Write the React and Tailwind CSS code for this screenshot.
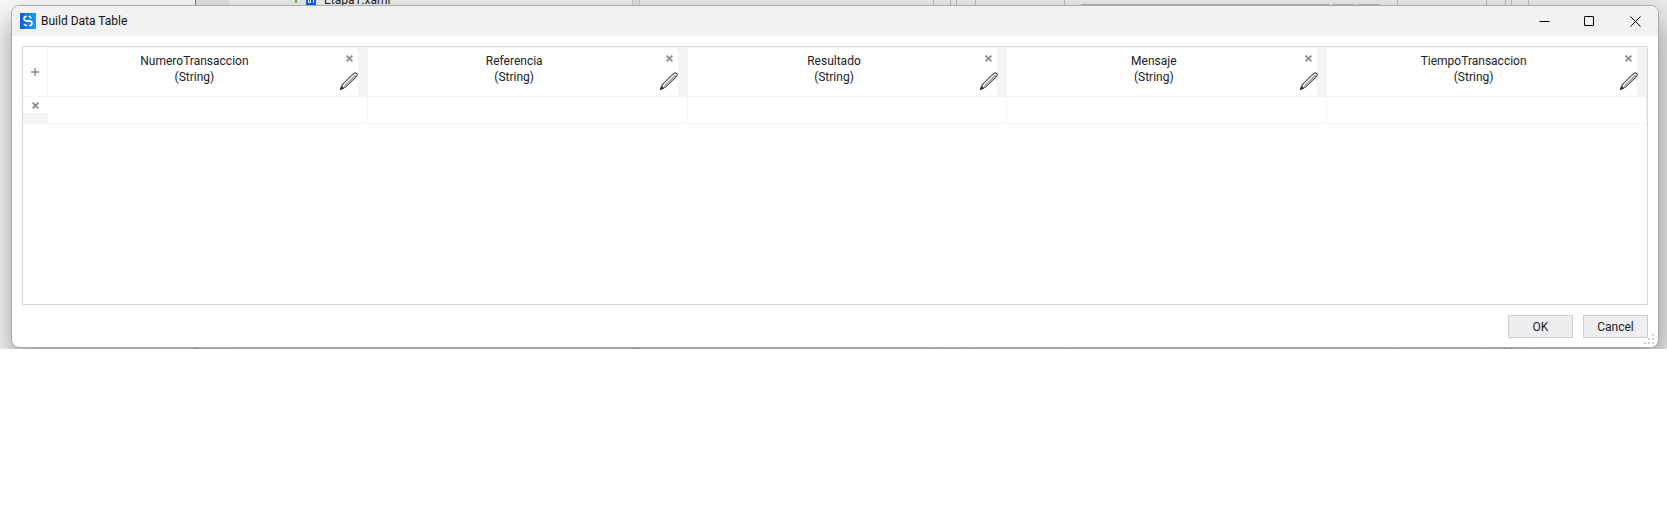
const columns = ['NumeroTransaccion', 'Referencia', 'Resultado', 'Mensaje', 'TiempoTransaccion'];

function Cross() {
  return (
    <svg width="7" height="7" viewBox="0 0 7 7" stroke="#8a8a8a" strokeWidth="1.7" aria-hidden="true">
      <path d="M.6 .6 6.4 6.4M6.4 .6 .6 6.4" />
    </svg>
  );
}

function Pencil() {
  return (
    <svg width="18" height="18" viewBox="0 0 18 18" aria-hidden="true">
      <path d="M.8 17.2 2.2 12.8 13.6 1.6Q15 .2 16.4 1.2 17.8 2.3 16.9 3.8L5.2 15.4Z" fill="#f4f4f4" stroke="#444" strokeWidth="1.1" />
      <path d="M4.4 14.2 15.6 3.4" stroke="#b0b0b0" strokeWidth="2" />
      <path d="M3.3 12.9 14 2.6" stroke="#fff" strokeWidth=".8" />
      <path d="M13 2.3 15.9 5" stroke="#888" strokeWidth=".7" />
      <path d="M.4 17.6 1.5 14.4 3.8 16.2Z" fill="#222" stroke="#222" strokeWidth=".6" />
    </svg>
  );
}

function Logo() {
  return (
    <svg width="16" height="16" viewBox="0 0 16 16" fill="none" aria-hidden="true">
      <defs>
        <linearGradient id="logo" x1="0" y1="0" x2="1" y2="0">
          <stop offset="0" stopColor="#0560dd" />
          <stop offset="1" stopColor="#1aa0ee" />
        </linearGradient>
      </defs>
      <path d="M0 0h16v16H0z" fill="url(#logo)" />
      <path d="M6.600 3.400Q4 3.600 4 5.700 4.100 7.800 7 8H9" stroke="#fff" strokeWidth="1.600" />
      <path d="M7.400 7.900H9.200Q12 8.300 12 10.400 11.900 12.500 9.200 12.700" stroke="#fff" strokeWidth="1.600" />
      <path d="M8.600 3.400H10.600M10.800 3.900V5.600M3.800 11.300Q5 12.500 7 12.600" stroke="#fff" strokeWidth="1.500" />
    </svg>
  );
}

/* The editor that lies behind the dialog; only its edges show. */
function Backdrop() {
  return (
    <div className="absolute inset-0 bg-[#e9e9e9]" aria-hidden="true">
      <svg className="absolute inset-0" width="1667" height="349">
        <path d="M0 0h195v349H0z" fill="#f7f7f7" />
        <path d="M196 0h33v349h-33z" fill="#e0e3e3" />
        <path d="M229 0h403v349H229z" fill="#ececec" />
        <path d="M633 0h6v349h-6z" fill="#dde0e0" />
        <path d="M195.500 0v349" stroke="#777" />
        <path d="M632.500 0v349M639.500 0v349" stroke="#c9cccc" />
        <path d="M933.500 0v349M950.500 0v349M956.500 0v349M975.500 0v349M1064.500 0v349M1397.500 0v349M1486.500 0v349M1505.500 0v349M1511.500 0v349M1528.500 0v349" stroke="#b4bcc2" />
        <path d="M1081 4.500h249M1332 4.500h23M1357 4.500h23" stroke="#b0b8bb" />
        <path d="M295 0h2v3h-2z" fill="#70b860" />
        <path d="M306 0h10v6h-10z" fill="#0a5fd0" />
        <path d="M308.500 0v2.500h2V0M313.500 0v3" stroke="#fff" fill="none" />
      </svg>
      <span className="absolute -top-2 left-[324px] text-xs leading-4">Etapa1.xaml</span>
    </div>
  );
}

export default function App() {
  return (
    <div className="min-h-screen bg-white font-['Roboto',sans-serif] text-xs leading-4 text-[#222]">
      <div className="relative overflow-hidden pt-[5px] pr-2 pb-px pl-[11px]">
        <Backdrop />
        <main className="relative flex flex-col overflow-hidden rounded-lg border border-[#a9a9a9] bg-white shadow-[0_14px_28px_rgba(0,0,0,0.38)]">
          <header className="flex h-[30px] items-center bg-[#f2f2f2] pl-2 text-[#111]">
            <Logo />
            <h1 className="ml-[5px] flex-1">Build Data Table</h1>
            <button type="button" aria-label="Minimize" className="flex h-full w-[45px] items-center justify-center">
              <svg width="11" height="11" stroke="#000"><path d="M.5 5.500h10" /></svg>
            </button>
            <button type="button" aria-label="Maximize" className="flex h-full w-[45px] items-center justify-center">
              <svg width="11" height="11" fill="none" stroke="#000"><rect x=".5" y=".5" width="9" height="9" rx=".5" /></svg>
            </button>
            <button type="button" aria-label="Close" className="flex h-full w-[46px] items-center justify-center">
              <svg width="11" height="11" stroke="#000"><path d="M.5 .5l10 10M10.500 .5l-10 10" /></svg>
            </button>
          </header>

          <div className="flex flex-col px-2.5 pt-2.5 pb-[9px]">
            <div className="min-h-[259px] border border-[#d5d7d9]">
              <table className="w-full table-fixed border-separate border-spacing-0">
                <thead>
                  <tr className="h-[50px]">
                    <th className="w-[25px] border-r border-b border-[#f3f5f5] p-0">
                      <button type="button" aria-label="Add column" className="flex h-[49px] w-full items-center justify-center">
                        <svg width="8" height="8" stroke="#8a8a8a" strokeWidth="1.5"><path d="M4 0v8M0 4h8" /></svg>
                      </button>
                    </th>
                    {columns.map((name) => (
                      <th key={name} className="border-t border-b border-[#f3f5f5] p-0 font-normal">
                        <div className="flex h-12 border-r-10 border-[#f3f5f5]">
                          <div className="flex-1 pt-[5px]">
                            <div>{name}</div>
                            <div>(String)</div>
                          </div>
                          <div className="flex w-[17px] flex-col items-center pt-[7px]">
                            <button type="button" aria-label={`Remove ${name}`}><Cross /></button>
                            <button type="button" aria-label={`Edit ${name}`} className="mt-[10px]"><Pencil /></button>
                          </div>
                        </div>
                      </th>
                    ))}
                  </tr>
                </thead>
                <tbody>
                  <tr className="h-[27px]">
                    <td className="bg-[#f3f5f5] p-0 align-top">
                      <button type="button" aria-label="Remove row" className="flex h-4 w-full items-center justify-center bg-white"><Cross /></button>
                    </td>
                    {columns.map((name) => (
                      <td key={name} className="border-r border-b border-[#f3f5f5] p-0" />
                    ))}
                  </tr>
                </tbody>
              </table>
            </div>
            <div className="mt-2.5 flex justify-end gap-2.5">
              <button type="button" className="h-[23px] w-[65px] border border-[#cbcdd1] bg-[#eeeef1]">OK</button>
              <button type="button" className="h-[23px] w-[65px] border border-[#cbcdd1] bg-[#eeeef1]">Cancel</button>
            </div>
          </div>
          <svg className="absolute right-1 bottom-[3px]" width="10" height="10" fill="#cfcfcf" aria-hidden="true">
            <path d="M8 0h2v2H8zM4 4h2v2H4zM8 4h2v2H8zM0 8h2v2H0zM4 8h2v2H4zM8 8h2v2H8z" />
          </svg>
        </main>
      </div>
    </div>
  );
}
